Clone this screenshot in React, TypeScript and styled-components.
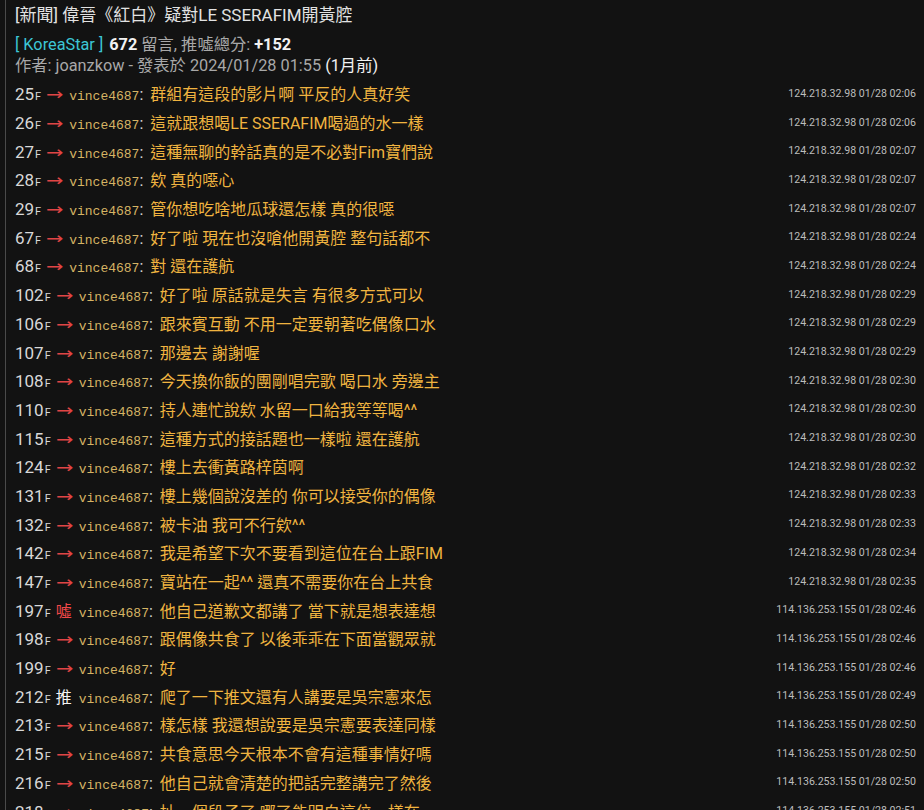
import styled, { createGlobalStyle } from 'styled-components';

const GlobalStyle = createGlobalStyle`
  html, body {
    margin: 0;
    padding: 0;
    background: #121212;
  }
  body {
    font-family: Roboto, "Noto Sans CJK TC", sans-serif;
    overflow: hidden;
  }
`;

const Page = styled.div`
  margin-left: 5px;
  min-height: 810px;
  border-left: 1px solid #4a4a4a;
  padding: 0 8px 0 9px;
  box-sizing: border-box;
`;

const Header = styled.div`
  padding-bottom: 3px;
`;

const Title = styled.div`
  font-size: 17px;
  line-height: 30px;
  color: #e2e2e2;
`;

const Info = styled.div<{ $gap?: number }>`
  margin-top: ${p => p.$gap || 0}px;
  font-size: 16.3px;
  line-height: 21px;
  color: #a8a8a8;
  white-space: nowrap;
`;

const Board = styled.span`
  color: #3cc6d6;
  margin-right: 6px;
`;

const Strong = styled.b`
  color: #f2f2f2;
  font-weight: 700;
`;

const Bright = styled.span`
  color: #f2f2f2;
`;

const List = styled.div`
  display: flex;
  flex-direction: column;
`;

const Row = styled.div`
  display: flex;
  align-items: center;
  justify-content: space-between;
  height: 28.7px;
  white-space: nowrap;
`;

const Main = styled.div`
  display: flex;
  align-items: baseline;
`;

const Floor = styled.span`
  font-size: 17px;
  color: #d8d8d8;
`;

const FloorF = styled.span`
  font-size: 11px;
  margin-left: 1px;
`;

const Tag = styled.span<{ $kind: string }>`
  display: inline-block;
  width: 17px;
  margin-left: 5px;
  font-size: 16px;
  font-family: Roboto, "Noto Sans CJK TC", sans-serif;
  color: ${p => (p.$kind === 'push' ? '#f4f4f4' : p.$kind === 'boo' ? '#f04848' : '#e04545')};
`;

const Arrow = styled.span`
  display: inline-block;
  font-family: "DejaVu Sans", sans-serif;
  transform: scaleX(1.3);
  transform-origin: left center;
`;

const User = styled.span`
  margin-left: 6px;
  font-family: "Liberation Mono", monospace;
  font-size: 13px;
  color: #d6b464;
`;

const Colon = styled.span`
  font-size: 16px;
  color: #d8d8d8;
  margin-right: 7px;
`;

const Content = styled.span`
  font-size: 16px;
  color: #f0b440;
`;

const Meta = styled.span`
  font-size: 10.6px;
  color: #bdbdbd;
`;

type Comment = { floor: number; kind: 'arrow' | 'push' | 'boo'; text: string; meta: string };

const A = '124.218.32.98 01/28 ';
const B = '114.136.253.155 01/28 ';

const comments: Comment[] = [
  { floor: 25, kind: 'arrow', text: '群組有這段的影片啊 平反的人真好笑', meta: A + '02:06' },
  { floor: 26, kind: 'arrow', text: '這就跟想喝LE SSERAFIM喝過的水一樣', meta: A + '02:06' },
  { floor: 27, kind: 'arrow', text: '這種無聊的幹話真的是不必對Fim寶們說', meta: A + '02:07' },
  { floor: 28, kind: 'arrow', text: '欸 真的噁心', meta: A + '02:07' },
  { floor: 29, kind: 'arrow', text: '管你想吃啥地瓜球還怎樣 真的很噁', meta: A + '02:07' },
  { floor: 67, kind: 'arrow', text: '好了啦 現在也沒嗆他開黃腔 整句話都不', meta: A + '02:24' },
  { floor: 68, kind: 'arrow', text: '對 還在護航', meta: A + '02:24' },
  { floor: 102, kind: 'arrow', text: '好了啦 原話就是失言 有很多方式可以', meta: A + '02:29' },
  { floor: 106, kind: 'arrow', text: '跟來賓互動 不用一定要朝著吃偶像口水', meta: A + '02:29' },
  { floor: 107, kind: 'arrow', text: '那邊去 謝謝喔', meta: A + '02:29' },
  { floor: 108, kind: 'arrow', text: '今天換你飯的團剛唱完歌 喝口水 旁邊主', meta: A + '02:30' },
  { floor: 110, kind: 'arrow', text: '持人連忙說欸 水留一口給我等等喝^^', meta: A + '02:30' },
  { floor: 115, kind: 'arrow', text: '這種方式的接話題也一樣啦 還在護航', meta: A + '02:30' },
  { floor: 124, kind: 'arrow', text: '樓上去衝黃路梓茵啊', meta: A + '02:32' },
  { floor: 131, kind: 'arrow', text: '樓上幾個說沒差的 你可以接受你的偶像', meta: A + '02:33' },
  { floor: 132, kind: 'arrow', text: '被卡油 我可不行欸^^', meta: A + '02:33' },
  { floor: 142, kind: 'arrow', text: '我是希望下次不要看到這位在台上跟FIM', meta: A + '02:34' },
  { floor: 147, kind: 'arrow', text: '寶站在一起^^ 還真不需要你在台上共食', meta: A + '02:35' },
  { floor: 197, kind: 'boo', text: '他自己道歉文都講了 當下就是想表達想', meta: B + '02:46' },
  { floor: 198, kind: 'arrow', text: '跟偶像共食了 以後乖乖在下面當觀眾就', meta: B + '02:46' },
  { floor: 199, kind: 'arrow', text: '好', meta: B + '02:46' },
  { floor: 212, kind: 'push', text: '爬了一下推文還有人講要是吳宗憲來怎', meta: B + '02:49' },
  { floor: 213, kind: 'arrow', text: '樣怎樣 我還想說要是吳宗憲要表達同樣', meta: B + '02:50' },
  { floor: 215, kind: 'arrow', text: '共食意思今天根本不會有這種事情好嗎', meta: B + '02:50' },
  { floor: 216, kind: 'arrow', text: '他自己就會清楚的把話完整講完了然後', meta: B + '02:50' },
  { floor: 218, kind: 'arrow', text: '扯一個段子了 哪了能明白這位一樣在', meta: B + '02:51' },
];

const tagText = (kind: string) =>
  kind === 'push' ? '推' : kind === 'boo' ? '噓' : <Arrow>→</Arrow>;

export default function App() {
  return (
    <Page>
      <GlobalStyle />
      <Header>
        <Title>[新聞] 偉晉《紅白》疑對LE SSERAFIM開黃腔</Title>
        <Info $gap={4}>
          <Board>[ KoreaStar ]</Board>
          <Strong>672</Strong> 留言, 推噓總分: <Strong>+152</Strong>
        </Info>
        <Info>
          作者: joanzkow - 發表於 2024/01/28 01:55 <Bright>(1月前)</Bright>
        </Info>
      </Header>
      <List>
        {comments.map(c => (
          <Row key={c.floor}>
            <Main>
              <Floor>
                {c.floor}
                <FloorF>F</FloorF>
              </Floor>
              <Tag $kind={c.kind}>{tagText(c.kind)}</Tag>
              <User>vince4687</User>
              <Colon>:</Colon>
              <Content>{c.text}</Content>
            </Main>
            <Meta>{c.meta}</Meta>
          </Row>
        ))}
      </List>
    </Page>
  );
}
